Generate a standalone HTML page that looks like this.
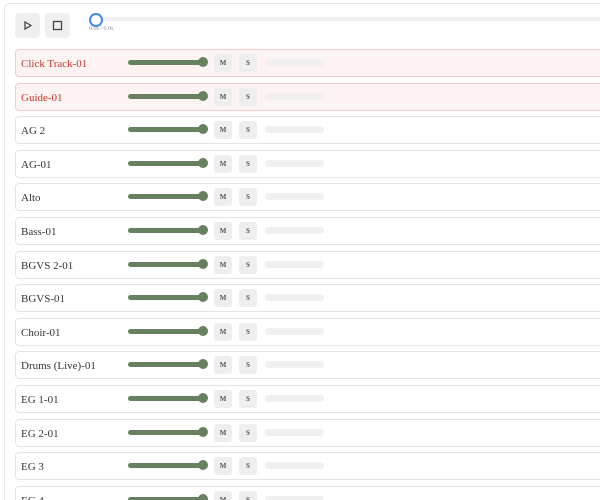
<!DOCTYPE html>
<html><head><style>
*{box-sizing:border-box;margin:0;padding:0}
html,body{width:600px;height:500px;overflow:hidden}
body{background:#fff;font-family:"Liberation Serif",serif;position:relative}
.outer{position:absolute;left:4px;top:3px;width:640px;height:560px;border:1px solid #e6e6e6;border-radius:6px}
.btn{position:absolute;top:13px;width:25px;height:25px;background:#efefef;border-radius:4px}
.prog{position:absolute;left:96px;top:17px;width:520px;height:4px;background:#f0f0f0;border-radius:2px}
.knob{position:absolute;left:89px;top:13px;width:14px;height:14px;border:2px solid #4a86e8;border-radius:50%;background:#fff}
.time{position:absolute;left:89px;top:26px;font-size:6px;color:#999}
.row{position:absolute;left:15px;width:620px;height:28px;border:1px solid #e4e4e4;border-radius:4px;background:#fff}
.row.red{background:#fdf3f3;border-color:#f3caca}
.name{position:absolute;left:5px;top:1px;line-height:26px;font-size:11px;color:#333}
.red .name{color:#c0392b}
.track{position:absolute;left:112px;top:10px;width:78px;height:5px;background:#67805f;border-radius:3px}
.dot{position:absolute;left:182px;top:7px;width:10px;height:10px;background:#67805f;border-radius:50%}
.m{position:absolute;top:4px;width:18px;height:18px;background:#eeeeee;border-radius:3px;font-size:7px;color:#555;text-align:center;line-height:18px;font-weight:bold}
.meter{position:absolute;left:249px;top:9px;width:59px;height:7px;background:#f0f0f0;border-radius:4px}
</style></head><body>
<div class="outer"></div>
<div class="btn" style="left:15px"><svg width="25" height="25"><path d="M10 9 L16 12.5 L10 16 Z" fill="none" stroke="#444" stroke-width="1.3"/></svg></div>
<div class="btn" style="left:45px"><svg width="25" height="25"><rect x="8.5" y="8.5" width="8" height="8" fill="none" stroke="#444" stroke-width="1.3"/></svg></div>
<div class="prog"></div>
<div class="knob"></div>
<div class="time">0.0s / 0.0s</div>
<div class="row red" style="top:49px"><div class="name">Click Track-01</div><div class="track"></div><div class="dot"></div><div class="m" style="left:198px">M</div><div class="m" style="left:223px">S</div><div class="meter"></div></div>
<div class="row red" style="top:82.6px"><div class="name">Guide-01</div><div class="track"></div><div class="dot"></div><div class="m" style="left:198px">M</div><div class="m" style="left:223px">S</div><div class="meter"></div></div>
<div class="row" style="top:116.2px"><div class="name">AG 2</div><div class="track"></div><div class="dot"></div><div class="m" style="left:198px">M</div><div class="m" style="left:223px">S</div><div class="meter"></div></div>
<div class="row" style="top:149.8px"><div class="name">AG-01</div><div class="track"></div><div class="dot"></div><div class="m" style="left:198px">M</div><div class="m" style="left:223px">S</div><div class="meter"></div></div>
<div class="row" style="top:183.4px"><div class="name">Alto</div><div class="track"></div><div class="dot"></div><div class="m" style="left:198px">M</div><div class="m" style="left:223px">S</div><div class="meter"></div></div>
<div class="row" style="top:217px"><div class="name">Bass-01</div><div class="track"></div><div class="dot"></div><div class="m" style="left:198px">M</div><div class="m" style="left:223px">S</div><div class="meter"></div></div>
<div class="row" style="top:250.6px"><div class="name">BGVS 2-01</div><div class="track"></div><div class="dot"></div><div class="m" style="left:198px">M</div><div class="m" style="left:223px">S</div><div class="meter"></div></div>
<div class="row" style="top:284.2px"><div class="name">BGVS-01</div><div class="track"></div><div class="dot"></div><div class="m" style="left:198px">M</div><div class="m" style="left:223px">S</div><div class="meter"></div></div>
<div class="row" style="top:317.8px"><div class="name">Choir-01</div><div class="track"></div><div class="dot"></div><div class="m" style="left:198px">M</div><div class="m" style="left:223px">S</div><div class="meter"></div></div>
<div class="row" style="top:351.4px"><div class="name">Drums (Live)-01</div><div class="track"></div><div class="dot"></div><div class="m" style="left:198px">M</div><div class="m" style="left:223px">S</div><div class="meter"></div></div>
<div class="row" style="top:385px"><div class="name">EG 1-01</div><div class="track"></div><div class="dot"></div><div class="m" style="left:198px">M</div><div class="m" style="left:223px">S</div><div class="meter"></div></div>
<div class="row" style="top:418.6px"><div class="name">EG 2-01</div><div class="track"></div><div class="dot"></div><div class="m" style="left:198px">M</div><div class="m" style="left:223px">S</div><div class="meter"></div></div>
<div class="row" style="top:452.2px"><div class="name">EG 3</div><div class="track"></div><div class="dot"></div><div class="m" style="left:198px">M</div><div class="m" style="left:223px">S</div><div class="meter"></div></div>
<div class="row" style="top:485.8px"><div class="name">EG 4</div><div class="track"></div><div class="dot"></div><div class="m" style="left:198px">M</div><div class="m" style="left:223px">S</div><div class="meter"></div></div>
</body></html>
